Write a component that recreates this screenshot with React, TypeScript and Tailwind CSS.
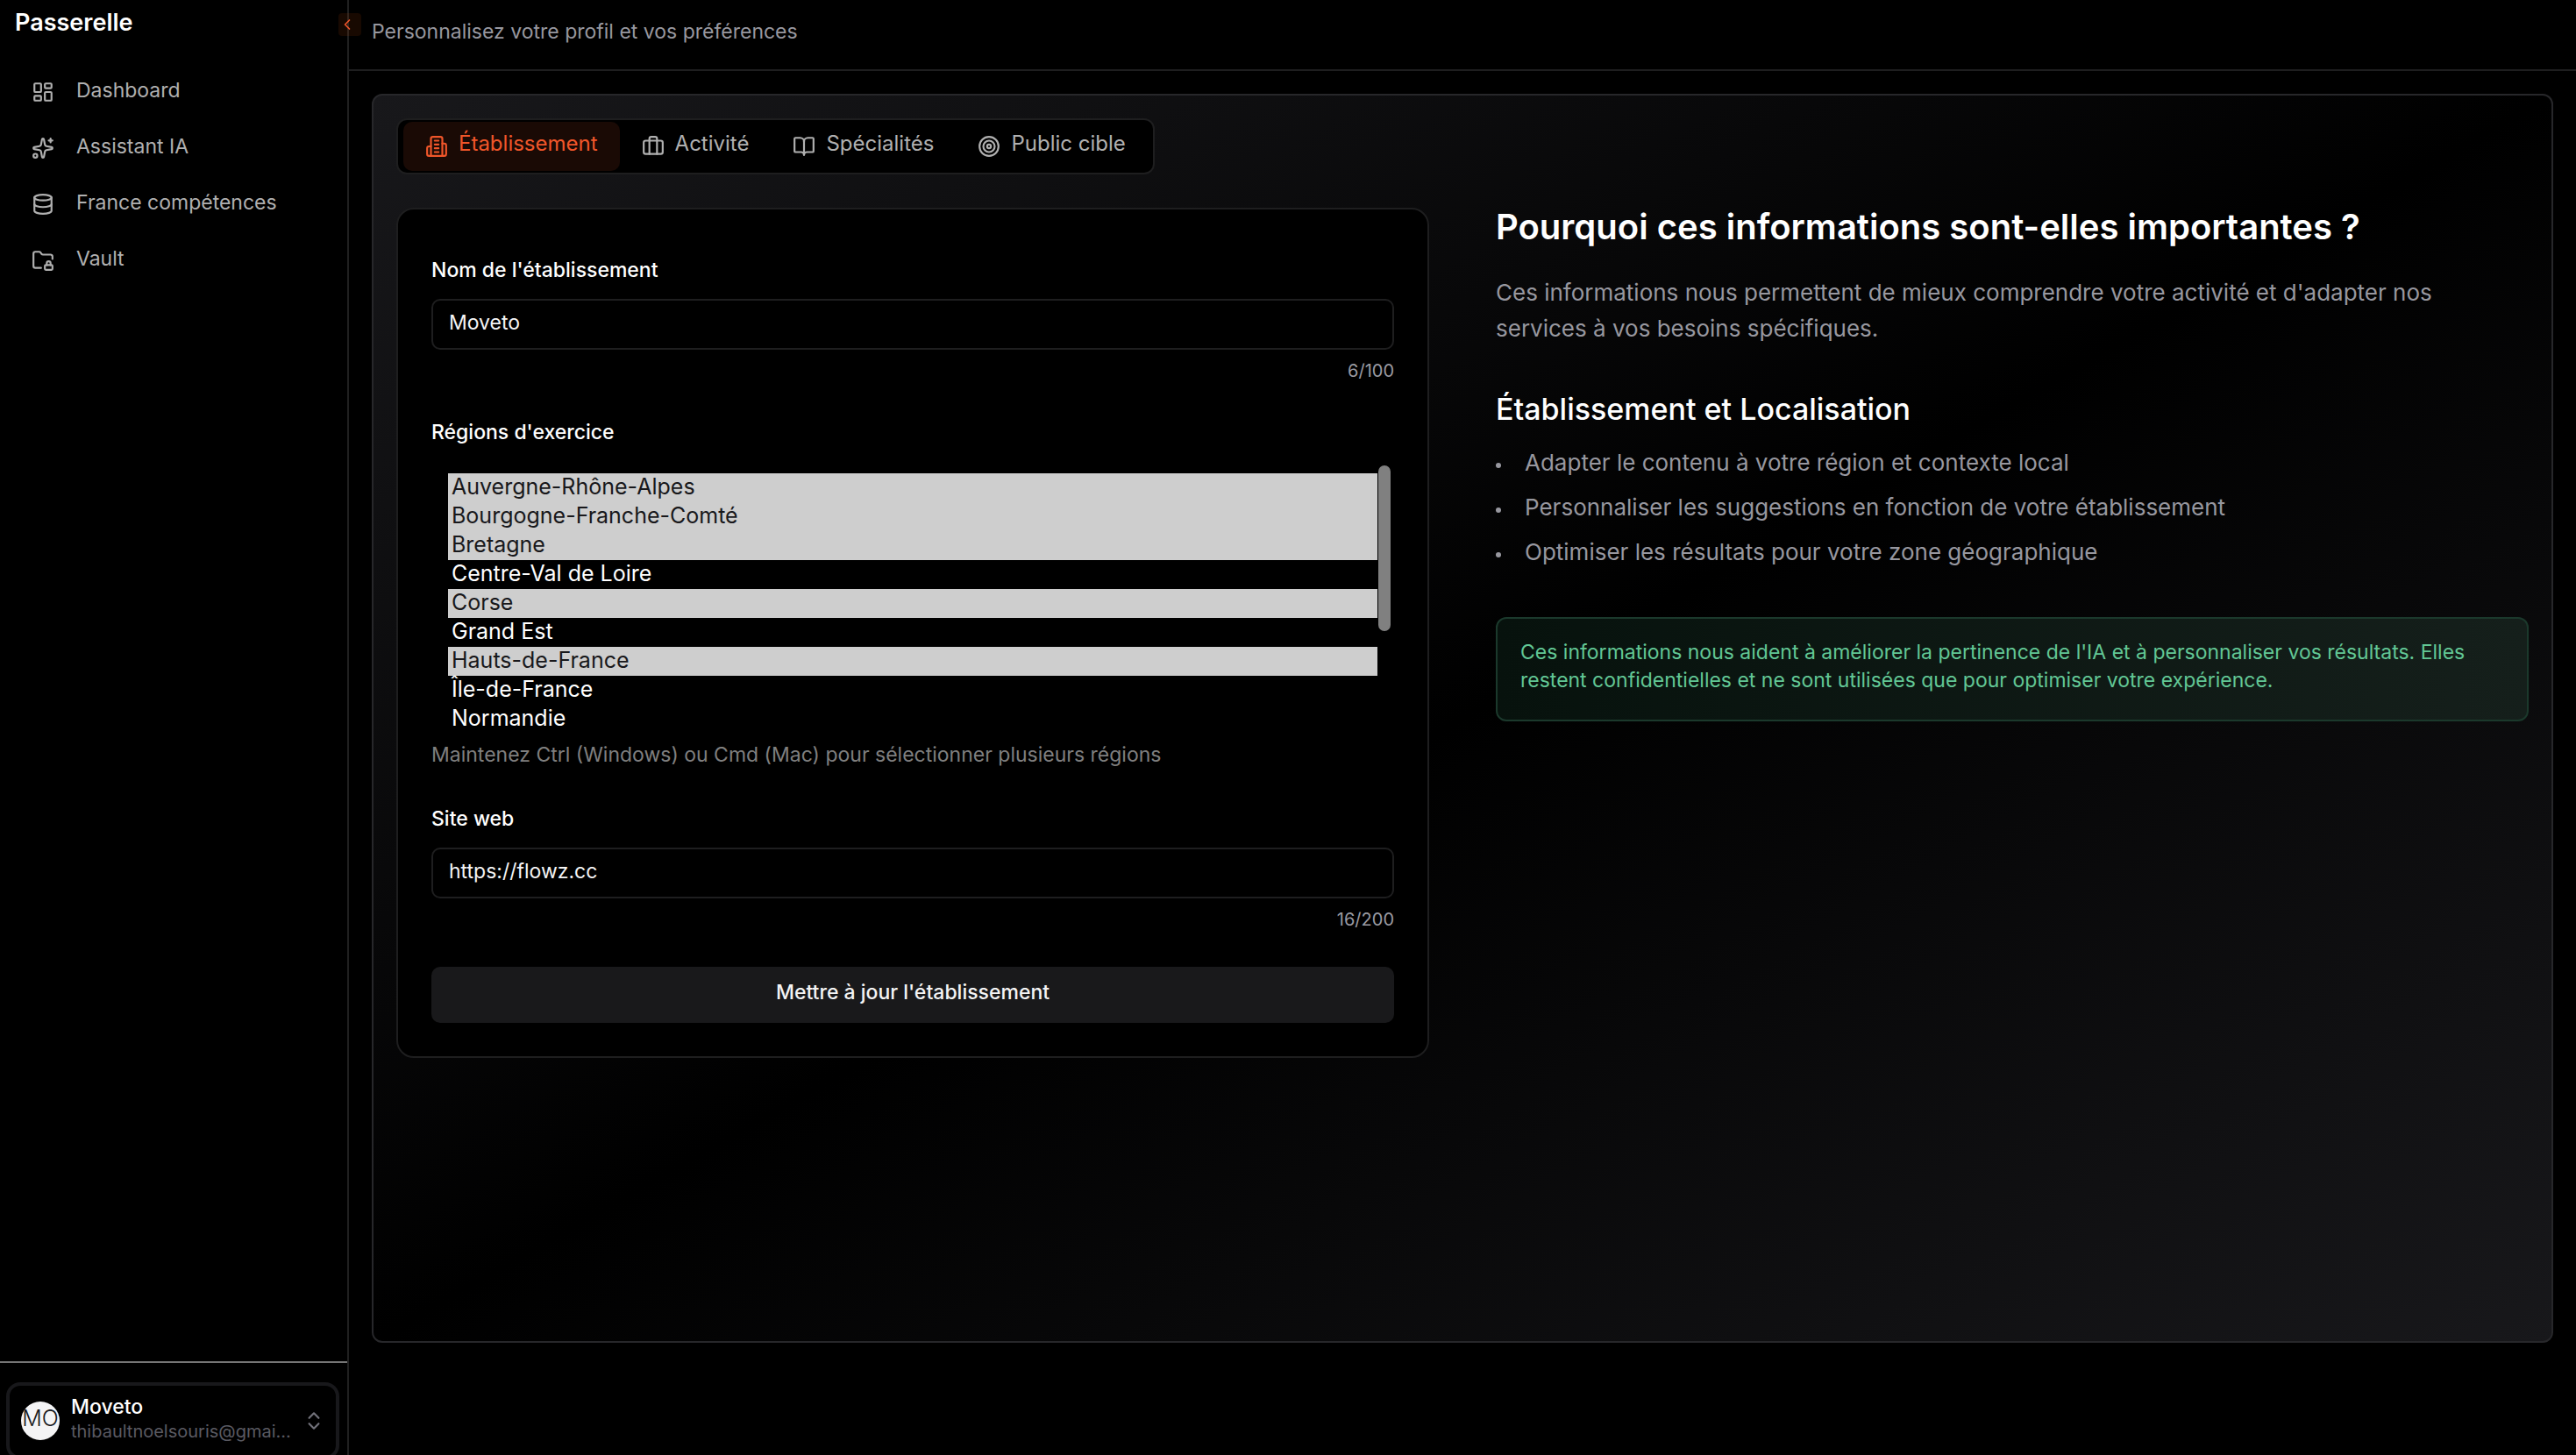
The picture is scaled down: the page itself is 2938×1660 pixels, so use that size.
import {
  BookOpen,
  Briefcase,
  ChevronLeft,
  ChevronsUpDown,
  Database,
  FolderLock,
  LayoutDashboard,
  Sparkles,
  Target,
} from "lucide-react";
import type { ComponentType, ReactNode } from "react";
import { useState } from "react";

type IconType = ComponentType<{ className?: string }>;

function BuildingIcon({ className }: { className?: string }) {
  return (
    <svg
      className={className}
      viewBox="0 0 24 24"
      fill="none"
      stroke="currentColor"
      strokeWidth="2"
      strokeLinecap="round"
      strokeLinejoin="round"
      aria-hidden="true"
    >
      <path d="M6 22V4a2 2 0 0 1 2-2h8a2 2 0 0 1 2 2v18Z" />
      <path d="M6 12H4a2 2 0 0 0-2 2v6a2 2 0 0 0 2 2h2" />
      <path d="M18 9h2a2 2 0 0 1 2 2v9a2 2 0 0 1-2 2h-2" />
      <path d="M10 6h4" />
      <path d="M10 10h4" />
      <path d="M10 14h4" />
      <path d="M10 18h4" />
    </svg>
  );
}

const NAV: { label: string; icon: IconType }[] = [
  { label: "Dashboard", icon: LayoutDashboard },
  { label: "Assistant IA", icon: Sparkles },
  { label: "France compétences", icon: Database },
  { label: "Vault", icon: FolderLock },
];

const TABS: { label: string; icon: IconType }[] = [
  { label: "Établissement", icon: BuildingIcon },
  { label: "Activité", icon: Briefcase },
  { label: "Spécialités", icon: BookOpen },
  { label: "Public cible", icon: Target },
];

const REGIONS = [
  "Auvergne-Rhône-Alpes",
  "Bourgogne-Franche-Comté",
  "Bretagne",
  "Centre-Val de Loire",
  "Corse",
  "Grand Est",
  "Hauts-de-France",
  "Île-de-France",
  "Normandie",
  "Nouvelle-Aquitaine",
  "Occitanie",
  "Pays de la Loire",
  "Provence-Alpes-Côte d'Azur",
  "Outre-mer",
];

const BENEFITS = [
  "Adapter le contenu à votre région et contexte local",
  "Personnaliser les suggestions en fonction de votre établissement",
  "Optimiser les résultats pour votre zone géographique",
];

function Sidebar() {
  return (
    <aside className="relative flex w-[398px] shrink-0 flex-col border-r-2 border-[#202020]">
      <div className="flex h-[73px] items-start px-[17px] pt-2.5 text-[27px] leading-8 font-semibold text-white">
        Passerelle
      </div>
      <nav className="flex flex-col">
        {NAV.map(({ label, icon: Icon }) => (
          <a
            key={label}
            href="#"
            className="flex h-16 items-center gap-[25px] px-9 text-[23px] leading-8 text-[#b0b0b0]"
          >
            <Icon className="size-[26px] shrink-0" />
            <span className="pb-1">{label}</span>
          </a>
        ))}
      </nav>
      <div className="mt-auto h-[107px] shrink-0 border-t-2 border-[#757575] pt-[22px] pr-[9px] pl-[7px]">
        <button
          type="button"
          className="flex h-[88px] w-full items-center rounded-2xl border-4 border-[#18181b] pr-3 pl-[13px] text-left"
        >
          <span className="flex size-11 shrink-0 items-center justify-center overflow-hidden rounded-full bg-[#f4f4f5] pb-1.5 text-[25px] leading-8 font-light text-[#18181b]">
            MO
          </span>
          <span className="ml-[13px] flex min-w-0 flex-1 flex-col pb-1">
            <span className="text-[23px] leading-7 font-medium text-white">Moveto</span>
            <span className="truncate text-[20px] leading-7 text-[#5a5a62]">
              thibaultnoelsouris@gmai...
            </span>
          </span>
          <ChevronsUpDown className="size-[26px] shrink-0 text-[#71717a]" />
        </button>
      </div>
      <button
        type="button"
        aria-label="Réduire le menu"
        className="absolute top-[15px] -right-4 flex size-[26px] items-center justify-start rounded bg-[#ea580c]/10 text-[#f0562a]"
      >
        <ChevronLeft className="size-5" />
      </button>
    </aside>
  );
}

function TabBar() {
  const [active, setActive] = useState("Établissement");
  return (
    <div
      role="tablist"
      className="flex h-16 items-center self-start rounded-xl border-2 border-[#1e1e1f] bg-black px-1.5"
    >
      {TABS.map(({ label, icon: Icon }) => (
        <button
          key={label}
          type="button"
          role="tab"
          aria-selected={active === label}
          onClick={() => setActive(label)}
          className={
            active === label
              ? "flex h-14 items-center gap-3 rounded-[10px] bg-[#1a0a05] px-[25px] text-[24px] leading-8 text-[#f0562a]"
              : "flex h-14 items-center gap-3 rounded-[10px] px-[25px] text-[24px] leading-8 text-[#b0b0b0]"
          }
        >
          <Icon className="size-[26px] shrink-0" />
          <span className="pb-1.5">{label}</span>
        </button>
      ))}
    </div>
  );
}

function FieldLabel({ htmlFor, children }: { htmlFor: string; children: ReactNode }) {
  return (
    <label
      htmlFor={htmlFor}
      className="flex h-16 items-center pb-0.5 text-[23px] leading-8 font-medium text-white"
    >
      {children}
    </label>
  );
}

function TextField(props: {
  id: string;
  label: string;
  initial: string;
  max: number;
}) {
  const [value, setValue] = useState(props.initial);
  return (
    <div className="flex flex-col">
      <FieldLabel htmlFor={props.id}>{props.label}</FieldLabel>
      <input
        id={props.id}
        value={value}
        maxLength={props.max}
        onChange={(e) => setValue(e.target.value)}
        className="h-[58px] w-full rounded-[10px] border-2 border-[#1e1e1f] bg-black px-[18px] pb-1 text-[23px] text-[#f4f4f5]"
      />
      <div className="flex h-[46px] items-center justify-end pt-0.5 text-[20px] leading-7 text-[#9a9aa2]">
        {value.length}/{props.max}
      </div>
    </div>
  );
}

function EstablishmentForm() {
  return (
    <form
      onSubmit={(e) => e.preventDefault()}
      className="flex flex-col rounded-[20px] border-2 border-[#1e1e1f] bg-black p-[38px]"
    >
      <TextField id="name" label="Nom de l'établissement" initial="Moveto" max={100} />
      <div className="mt-[17px] flex flex-col">
        <FieldLabel htmlFor="regions">Régions d'exercice</FieldLabel>
        <div className="relative pr-1 pl-[19px]">
          <select
            id="regions"
            multiple
            defaultValue={[
              "Auvergne-Rhône-Alpes",
              "Bourgogne-Franche-Comté",
              "Bretagne",
              "Corse",
              "Hauts-de-France",
            ]}
            className="block h-[311px] w-full overflow-y-scroll bg-black pt-3.5 pr-[15px] text-[25px] text-white outline-none [scrollbar-width:none]"
          >
            {REGIONS.map((region) => (
              <option
                key={region}
                className="h-[33px] px-1 pt-0 pb-[5px] leading-7 checked:bg-[#cecece] checked:bg-linear-to-r checked:from-[#cecece] checked:to-[#cecece] checked:text-[#18181b]"
              >
                {region}
              </option>
            ))}
          </select>
          <div className="pointer-events-none absolute top-[5px] right-1 h-[189px] w-3.5 rounded-full bg-[#808080]" />
        </div>
        <p className="flex h-[46px] items-center pt-0.5 text-[23px] leading-8 text-[#7f7f7f]">
          Maintenez Ctrl (Windows) ou Cmd (Mac) pour sélectionner plusieurs régions
        </p>
      </div>
      <div className="mt-5">
        <TextField id="website" label="Site web" initial="https://flowz.cc" max={200} />
      </div>
      <button
        type="submit"
        className="mt-8 h-16 rounded-[10px] bg-[#19191b] pb-1.5 text-[23px] leading-8 font-medium text-[#f4f4f5]"
      >
        Mettre à jour l'établissement
      </button>
    </form>
  );
}

function InfoColumn() {
  return (
    <section className="flex flex-col pt-0.5">
      <h1 className="text-[40px] leading-10 font-semibold text-white">
        Pourquoi ces informations sont-elles importantes ?
      </h1>
      <p className="mt-[34px] max-w-[1150px] text-[26px] leading-[41px] text-[#97979f]">
        Ces informations nous permettent de mieux comprendre votre activité et d'adapter nos
        services à vos besoins spécifiques.
      </p>
      <h2 className="mt-[52px] text-[34px] leading-10 font-medium text-white">
        Établissement et Localisation
      </h2>
      <ul className="mt-5 flex flex-col gap-2.5">
        {BENEFITS.map((item) => (
          <li
            key={item}
            className="flex items-center gap-[27px] text-[26px] leading-[41px] text-[#97979f]"
          >
            <span className="mt-1.5 size-1.5 shrink-0 rounded-full bg-[#97979f]" />
            {item}
          </li>
        ))}
      </ul>
      <div className="mt-[54px] rounded-xl border-2 border-[#1b392c] bg-linear-to-r from-[#07120d] to-[#151f1b] px-[26px] pt-[22px] pb-[29px] text-[23px] leading-8 text-[#62c795]">
        Ces informations nous aident à améliorer la pertinence de l'IA et à personnaliser vos
        résultats. Elles restent confidentielles et ne sont utilisées que pour optimiser votre
        expérience.
      </div>
    </section>
  );
}

export default function App() {
  return (
    <div className="flex h-screen overflow-hidden bg-black font-['Inter',sans-serif]">
      <Sidebar />
      <div className="flex min-w-0 flex-1 flex-col">
        <header className="flex h-[81px] shrink-0 items-center border-b-2 border-[#1e1e1f] px-[26px] pb-2 text-[23px] leading-8 text-[#97979f]">
          Personnalisez votre profil et vos préférences
        </header>
        <main className="flex min-h-0 flex-1 flex-col px-[26px] pt-[26px] pb-32">
          <div className="flex flex-1 flex-col gap-[38px] rounded-xl border-2 border-[#27272a] bg-linear-to-br/srgb from-[#18181b] via-black to-[#18181b] p-[26px]">
            <TabBar />
            <div className="grid grid-cols-2 items-start gap-[76px]">
              <EstablishmentForm />
              <InfoColumn />
            </div>
          </div>
        </main>
      </div>
    </div>
  );
}
